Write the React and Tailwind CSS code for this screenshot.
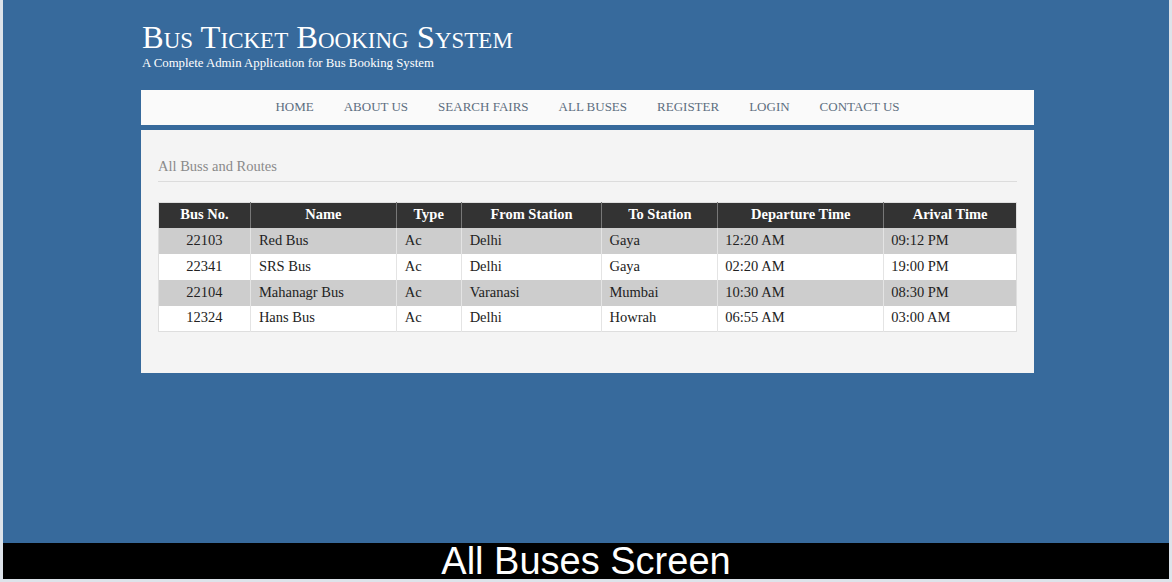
const navItems = ['Home', 'About Us', 'Search Fairs', 'All Buses', 'Register', 'Login', 'Contact Us'];

const buses = [
  { no: '22103', name: 'Red Bus', type: 'Ac', from: 'Delhi', to: 'Gaya', dep: '12:20 AM', arr: '09:12 PM' },
  { no: '22341', name: 'SRS Bus', type: 'Ac', from: 'Delhi', to: 'Gaya', dep: '02:20 AM', arr: '19:00 PM' },
  { no: '22104', name: 'Mahanagr Bus', type: 'Ac', from: 'Varanasi', to: 'Mumbai', dep: '10:30 AM', arr: '08:30 PM' },
  { no: '12324', name: 'Hans Bus', type: 'Ac', from: 'Delhi', to: 'Howrah', dep: '06:55 AM', arr: '03:00 AM' },
];

const serif = { fontFamily: '"Liberation Serif", "Times New Roman", serif' };

export default function App() {
  return (
    <div className="w-[1172px] h-[582px] flex flex-col border-l-[3px] border-r-[3px] border-b-[3px] border-[#dde3ea] overflow-hidden" style={serif}>
      <div className="flex-1 bg-[#376a9c]">
        <div className="ml-[138px] w-[893px]">
          {/* Header */}
          <div className="pt-[20px] pl-[1px] text-white">
            <h1 className="text-[32.5px] leading-[34px] [font-variant:small-caps]">Bus Ticket Booking System</h1>
            <p className="text-[12.8px] leading-[14px] mt-[2px]">A Complete Admin Application for Bus Booking System</p>
          </div>

          {/* Nav */}
          <nav className="mt-[20px] h-[35px] bg-[#fafafa] flex items-center justify-center gap-[30px]">
            {navItems.map((item) => (
              <a key={item} href="#" className="text-[13px] uppercase text-[#5d6e80] -mt-[1px]">
                {item}
              </a>
            ))}
          </nav>

          {/* Content */}
          <div className="mt-[5px] h-[243px] bg-[#f4f4f4] px-[17px] pt-[27px]">
            <h2 className="text-[14.5px] leading-[18px] text-[#8a8a8a] pb-[6px] border-b border-[#dcdcdc]">All Buss and Routes</h2>
            <table className="mt-[20px] w-[859px] border-collapse text-[14.5px] text-[#222] border border-[#dedede]">
              <thead>
                <tr className="bg-[#333333] text-white font-bold h-[25px]">
                  <th className="w-[92px] border-r border-[#777]">Bus No.</th>
                  <th className="w-[146px] border-r border-[#777]">Name</th>
                  <th className="w-[65px] border-r border-[#777]">Type</th>
                  <th className="w-[141px] border-r border-[#777]">From Station</th>
                  <th className="w-[116px] border-r border-[#777]">To Station</th>
                  <th className="w-[166px] border-r border-[#777]">Departure Time</th>
                  <th className="w-[133px]">Arival Time</th>
                </tr>
              </thead>
              <tbody>
                {buses.map((b, i) => (
                  <tr key={b.no} className={`h-[26px] ${i % 2 === 0 ? 'bg-[#cdcdcd]' : 'bg-white'}`}>
                    <td className="text-center border-r border-[#e4e4e4]">{b.no}</td>
                    <td className="pl-[8px] border-r border-[#e4e4e4]">{b.name}</td>
                    <td className="pl-[8px] border-r border-[#e4e4e4]">{b.type}</td>
                    <td className="pl-[8px] border-r border-[#e4e4e4]">{b.from}</td>
                    <td className="pl-[7px] border-r border-[#e4e4e4]">{b.to}</td>
                    <td className="pl-[7px] border-r border-[#e4e4e4]">{b.dep}</td>
                    <td className="pl-[7px]">{b.arr}</td>
                  </tr>
                ))}
              </tbody>
            </table>
          </div>
        </div>
      </div>

      {/* Caption bar */}
      <div className="h-[36px] bg-black flex items-center justify-center">
        <span className="text-white text-[38px] leading-none" style={{ fontFamily: '"Liberation Sans", Arial, sans-serif' }}>
          All Buses Screen
        </span>
      </div>
    </div>
  );
}
